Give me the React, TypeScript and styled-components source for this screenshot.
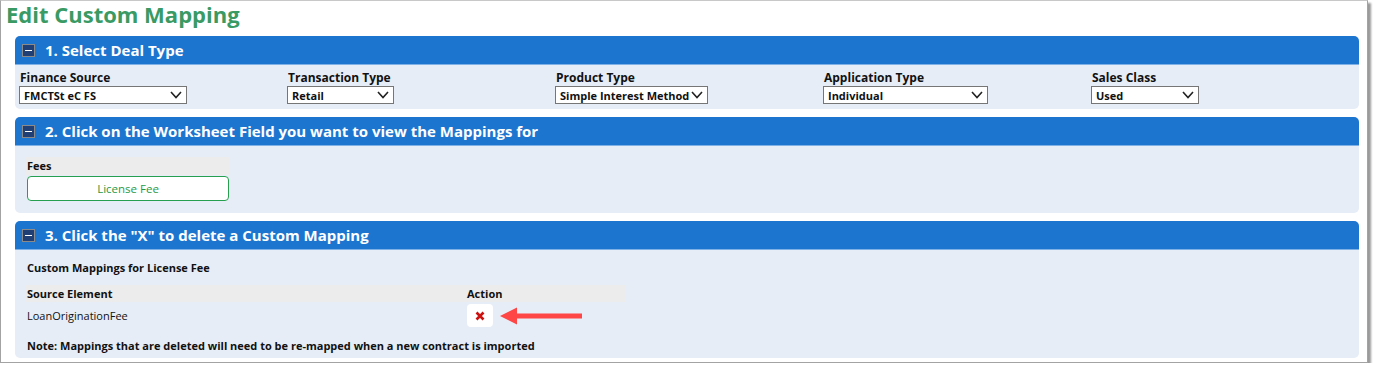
import React from "react";
import styled, { createGlobalStyle } from "styled-components";

const COLOURS = {
  GREEN: "#3a9a63",
  BLUE: "#1c75cf",
  BLUE_LINE: "#7fb0e6",
  PANEL: "#e6edf6",
  NAVY: "#1f3f75",
  GREY_ROW: "#ececec",
  TEXT: "#111",
  RED: "#cc1111",
  ARROW: "#ff4646",
};

const GlobalStyle = createGlobalStyle`
  body {
    margin: 0;
    background: #fff;
    font-family: "Open Sans", "Noto Sans", sans-serif;
    color: ${COLOURS.TEXT};
  }
`;

const Frame = styled.div`
  width: 1366px;
  height: 361px;
  border: 1px solid #a3a3a3;
  border-top-color: #c8c8c8;
  box-shadow: 3px 3px 2px #9a9a9a;
  background: #fff;
  overflow: hidden;
`;

const Title = styled.h1`
  margin: 0;
  padding: 0 0 0 5px;
  height: 35px;
  font-size: 22px;
  line-height: 26px;
  font-weight: 700;
  color: ${COLOURS.GREEN};
`;

const Panels = styled.div`
  display: flex;
  flex-direction: column;
  gap: 8px;
  padding: 0 8px 0 14px;
`;

const Panel = styled.section`
  border-radius: 5px;
  overflow: hidden;
  background: ${COLOURS.PANEL};
`;

const PanelHeader = styled.div`
  height: 28px;
  display: flex;
  align-items: center;
  gap: 10px;
  padding-left: 7px;
  background: ${COLOURS.BLUE};
  border-bottom: 1px solid ${COLOURS.BLUE_LINE};
`;

const ToggleIcon = styled.span`
  width: 11px;
  height: 11px;
  border: 1px solid #8a8a8a;
  background: ${COLOURS.NAVY};
  display: flex;
  align-items: center;
  justify-content: center;
  &::after {
    content: "";
    width: 7px;
    height: 1px;
    background: #fff;
  }
`;

const HeaderTitle = styled.h2`
  margin: 0;
  font-size: 15px;
  font-weight: 700;
  color: #fff;
  line-height: 20px;
`;

const PanelBody = styled.div<{ $pad: string; $height: number }>`
  padding: ${(p) => p.$pad};
  height: ${(p) => p.$height}px;
  box-sizing: border-box;
`;

const FieldGrid = styled.div`
  display: grid;
  grid-template-columns: repeat(5, 268px);
`;

const Field = styled.label`
  display: flex;
  flex-direction: column;
  align-items: flex-start;
`;

const FieldLabel = styled.span`
  font-size: 12px;
  font-weight: 700;
  line-height: 13px;
  margin-bottom: 2px;
  padding-left: 1px;
`;

const SelectWrap = styled.span<{ $width: number }>`
  position: relative;
  width: ${(p) => p.$width}px;
  height: 18px;
`;

const Select = styled.select`
  appearance: none;
  display: block;
  width: 100%;
  height: 18px;
  margin: 0;
  padding: 0 0 0 4px;
  border: 1px solid #767676;
  border-radius: 0;
  background: #fff;
  font-family: "Open Sans", "Noto Sans", sans-serif;
  font-size: 11px;
  font-weight: 700;
  color: #111;
  outline: none;
`;

const Chevron = styled.svg`
  position: absolute;
  right: 5px;
  top: 5px;
  pointer-events: none;
`;

const FieldGroup = styled.div`
  width: 204px;
  display: flex;
  flex-direction: column;
`;

const GroupLabel = styled.div`
  background: ${COLOURS.GREY_ROW};
  font-size: 11px;
  font-weight: 700;
  line-height: 18px;
  height: 18px;
  padding-left: 1px;
`;

const FieldButton = styled.button`
  margin: 1px 1px 0;
  height: 25px;
  border: 1px solid #26a04f;
  border-radius: 4px;
  background: #fff;
  color: #1f9a48;
  font-family: "Open Sans", "Noto Sans", sans-serif;
  font-size: 11.5px;
  padding: 0;
`;

const SubTitle = styled.div`
  font-size: 11px;
  font-weight: 700;
  line-height: 16px;
  padding-left: 1px;
`;

const MappingTable = styled.table`
  width: 600px;
  border-collapse: collapse;
  margin-top: 9px;
`;

const HeadCell = styled.th<{ $width?: number }>`
  background: ${COLOURS.GREY_ROW};
  text-align: left;
  font-size: 11px;
  font-weight: 700;
  height: 17px;
  padding: 0 1px;
  width: ${(p) => (p.$width ? `${p.$width}px` : "auto")};
`;

const Cell = styled.td`
  font-size: 11px;
  height: 25px;
  padding: 1px 1px 0;
  vertical-align: middle;
`;

const ActionCell = styled.div`
  display: flex;
  align-items: center;
  gap: 7px;
`;

const DeleteButton = styled.button`
  width: 26px;
  height: 23px;
  border: none;
  border-radius: 4px;
  background: #fff;
  display: flex;
  align-items: center;
  justify-content: center;
  padding: 0;
`;

const Note = styled.div`
  margin-top: 10px;
  font-size: 11px;
  font-weight: 700;
  line-height: 16px;
  padding-left: 1px;
`;

const dealFields = [
  { label: "Finance Source", value: "FMCTSt eC FS", width: 168 },
  { label: "Transaction Type", value: "Retail", width: 107 },
  { label: "Product Type", value: "Simple Interest Method", width: 153 },
  { label: "Application Type", value: "Individual", width: 165 },
  { label: "Sales Class", value: "Used", width: 108 },
];

const App: React.FC = () => {
  return (
    <>
      <GlobalStyle />
      <Frame>
        <Title>Edit Custom Mapping</Title>
        <Panels>
          <Panel>
            <PanelHeader>
              <ToggleIcon />
              <HeaderTitle>1. Select Deal Type</HeaderTitle>
            </PanelHeader>
            <PanelBody $pad="6px 0 0 4px" $height={44}>
              <FieldGrid>
                {dealFields.map((f) => (
                  <Field key={f.label}>
                    <FieldLabel>{f.label}</FieldLabel>
                    <SelectWrap $width={f.width}>
                      <Select defaultValue={f.value}>
                        <option>{f.value}</option>
                      </Select>
                      <Chevron width="12" height="8" viewBox="0 0 12 8">
                        <path
                          d="M1 1 L6 6.6 L11 1"
                          fill="none"
                          stroke="#222"
                          strokeWidth="1.6"
                        />
                      </Chevron>
                    </SelectWrap>
                  </Field>
                ))}
              </FieldGrid>
            </PanelBody>
          </Panel>

          <Panel>
            <PanelHeader>
              <ToggleIcon />
              <HeaderTitle>
                2. Click on the Worksheet Field you want to view the Mappings for
              </HeaderTitle>
            </PanelHeader>
            <PanelBody $pad="11px 0 0 11px" $height={67}>
              <FieldGroup>
                <GroupLabel>Fees</GroupLabel>
                <FieldButton>License Fee</FieldButton>
              </FieldGroup>
            </PanelBody>
          </Panel>

          <Panel>
            <PanelHeader>
              <ToggleIcon />
              <HeaderTitle>3. Click the "X" to delete a Custom Mapping</HeaderTitle>
            </PanelHeader>
            <PanelBody $pad="10px 0 0 11px" $height={108}>
              <SubTitle>Custom Mappings for License Fee</SubTitle>
              <MappingTable>
                <thead>
                  <tr>
                    <HeadCell $width={438}>Source Element</HeadCell>
                    <HeadCell>Action</HeadCell>
                  </tr>
                </thead>
                <tbody>
                  <tr>
                    <Cell>LoanOriginationFee</Cell>
                    <Cell>
                      <ActionCell>
                        <DeleteButton aria-label="Delete">
                          <svg width="10" height="10" viewBox="0 0 10 10">
                            <path
                              d="M1.5 1.5 L8.5 8.5 M8.5 1.5 L1.5 8.5"
                              stroke={COLOURS.RED}
                              strokeWidth="2.6"
                            />
                          </svg>
                        </DeleteButton>
                        <svg width="82" height="18" viewBox="0 0 82 18">
                          <polygon points="0,9 17,0.5 17,17.5" fill={COLOURS.ARROW} />
                          <rect x="16" y="6.5" width="66" height="5" fill={COLOURS.ARROW} />
                        </svg>
                      </ActionCell>
                    </Cell>
                  </tr>
                </tbody>
              </MappingTable>
              <Note>
                Note: Mappings that are deleted will need to be re-mapped when a
                new contract is imported
              </Note>
            </PanelBody>
          </Panel>
        </Panels>
      </Frame>
    </>
  );
};

export default App;
